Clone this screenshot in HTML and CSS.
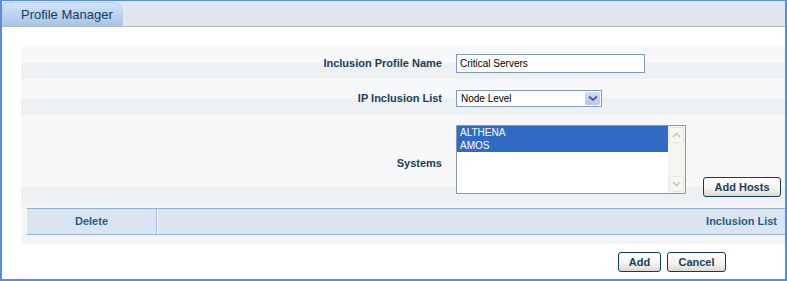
FILE: index.html
```html
<!DOCTYPE html>
<html lang="en">
<head>
    <meta charset="UTF-8">
    <title>Profile Manager</title>
    <link rel="stylesheet" href="styles.css">
</head>
<body>
    <div class="frame">
        <!-- Tab strip -->
        <div class="tabbar">
            <div class="tab">Profile Manager</div>
        </div>

        <div class="content">
            <div class="panel">
                <div class="row row-name">
                    <div class="label">Inclusion Profile Name</div>
                    <div class="field">
                        <div class="textbox">Critical Servers</div>
                    </div>
                </div>

                <div class="row row-list">
                    <div class="label">IP Inclusion List</div>
                    <div class="field">
                        <div class="dropdown">
                            <span>Node Level</span>
                            <span class="drop-btn">
                                <svg width="10" height="7" viewBox="0 0 10 7"><path d="M1 1.5 L5 5 L9 1.5" fill="none" stroke="#4d5f86" stroke-width="2"/></svg>
                            </span>
                        </div>
                    </div>
                </div>

                <div class="row row-systems">
                    <div class="label label-systems">Systems</div>
                    <div class="field field-systems">
                        <div class="listbox">
                            <div class="items">
                                <div class="item selected">ALTHENA</div>
                                <div class="item selected">AMOS</div>
                            </div>
                            <div class="scrollbar">
                                <div class="arrow">
                                    <svg width="9" height="6" viewBox="0 0 9 6"><path d="M1 5 L4.5 1.5 L8 5" fill="none" stroke="#c9c7ba" stroke-width="1.5"/></svg>
                                </div>
                                <div class="arrow">
                                    <svg width="9" height="6" viewBox="0 0 9 6"><path d="M1 1 L4.5 4.5 L8 1" fill="none" stroke="#c9c7ba" stroke-width="1.5"/></svg>
                                </div>
                            </div>
                        </div>
                        <button class="btn btn-hosts">Add Hosts</button>
                    </div>
                </div>

                <div class="spacer"></div>

                <div class="grid-head">
                    <div class="col-delete">Delete</div>
                    <div class="col-list">Inclusion List</div>
                </div>

                <div class="grid-foot"></div>
            </div>

            <div class="actions">
                <button class="btn btn-add">Add</button>
                <button class="btn btn-cancel">Cancel</button>
            </div>
        </div>
    </div>
</body>
</html>
```

FILE: styles.css
```css
/* Reset */
* {
    margin: 0;
    padding: 0;
    box-sizing: border-box;
}

body {
    background: #ffffff;
    font-family: "Liberation Sans", Arial, sans-serif;
    color: #1b3d5a;
}

/* Outer frame */
.frame {
    width: 787px;
    height: 281px;
    border: 2px solid #5a8fd8;
    border-top-width: 1px;
    background: #ffffff;
}

/* Tab strip */
.tabbar {
    height: 26px;
    background: #e1e6ee;
    border-bottom: 1px solid #b3bbb1;
    padding-top: 1px;
}

.tab {
    width: 121px;
    height: 24px;
    padding-left: 18px;
    font-size: 13px;
    line-height: 23px;
    color: #1a3c5c;
    background: linear-gradient(#d2e3f6, #a4c4ea);
    border: 1px solid #b9cde6;
    border-bottom: none;
    border-radius: 5px 10px 0 0;
}

/* Main content */
.content {
    padding: 20px 0 0 19px;
}

.panel {
    background: #f4f6f8;
}

.row {
    display: flex;
    background: linear-gradient(to top, #eef1f4 16px, #f6f8fa 16px);
}

.row-name {
    height: 32px;
}

.row-list {
    height: 35px;
}

.row-systems {
    height: 89px;
}

.label {
    width: 435px;
    padding-right: 14px;
    text-align: right;
    font-size: 11px;
    font-weight: bold;
    align-self: center;
}

.row-list .label {
    padding-top: 2px;
}

.label-systems {
    padding-top: 8px;
}

.field {
    display: flex;
    align-items: center;
}

.row-list .field {
    padding-top: 4px;
}

/* Text input */
.textbox {
    width: 189px;
    height: 19px;
    border: 1px solid #7f9db9;
    background: #ffffff;
    font-size: 10px;
    line-height: 17px;
    padding-left: 3px;
    color: #000000;
}

/* Select */
.dropdown {
    width: 146px;
    height: 17px;
    border: 1px solid #7f9db9;
    background: #ffffff;
    display: flex;
    align-items: center;
    justify-content: space-between;
    padding: 0 1px 0 4px;
    font-size: 10px;
    color: #000000;
}

.drop-btn {
    width: 15px;
    height: 13px;
    display: flex;
    align-items: center;
    justify-content: center;
    background: linear-gradient(#d2dcf8, #b4c6f2);
    border-radius: 2px;
}

/* Systems list */
.field-systems {
    align-items: flex-start;
    padding: 11px 0 6px;
}

.listbox {
    width: 230px;
    height: 69px;
    border: 1px solid #7f9db9;
    background: #ffffff;
    display: flex;
}

.items {
    flex: 1;
}

.item {
    height: 13px;
    font-size: 10px;
    line-height: 13px;
    padding-left: 3px;
    color: #000000;
}

.item.selected {
    background: #316ac5;
    color: #ffffff;
}

.scrollbar {
    width: 17px;
    background: #f5f4ef;
    display: flex;
    flex-direction: column;
    justify-content: space-between;
    padding: 1px 0;
}

.arrow {
    height: 16px;
    margin: 0 1px;
    border: 1px solid #e8e6dc;
    border-radius: 2px;
    background: #f7f6f2;
    display: flex;
    align-items: center;
    justify-content: center;
}

/* Buttons */
.btn {
    font-family: "Liberation Sans", Arial, sans-serif;
    font-size: 11px;
    font-weight: bold;
    color: #1c3d5c;
    height: 20px;
    border: 1px solid #0e3a67;
    border-radius: 3px;
    background: linear-gradient(#ffffff, #f3f2ee 60%, #dcd9cf);
}

.btn-hosts {
    width: 78px;
    margin-left: 17px;
    align-self: flex-end;
}

.btn-add {
    width: 43px;
}

.btn-cancel {
    width: 59px;
}

/* Lower grid */
.spacer {
    height: 5px;
    background: #f3f5f7;
}

.grid-head {
    margin-left: 6px;
    height: 27px;
    display: flex;
    background: #dae5f3;
    border-top: 1px solid #97b2d4;
    border-bottom: 1px solid #97b2d4;
    font-size: 11px;
    font-weight: bold;
    color: #2f5a7c;
    line-height: 25px;
}

.col-delete {
    width: 130px;
    text-align: center;
    border-right: 1px solid #a9c0dc;
}

.col-list {
    flex: 1;
    text-align: right;
    padding-right: 8px;
    border-left: 1px solid #ffffff;
}

.grid-foot {
    height: 9px;
    background: #f2f4f6;
}

.actions {
    display: flex;
    justify-content: flex-end;
    gap: 6px;
    padding: 8px 59px 0 0;
}
```
